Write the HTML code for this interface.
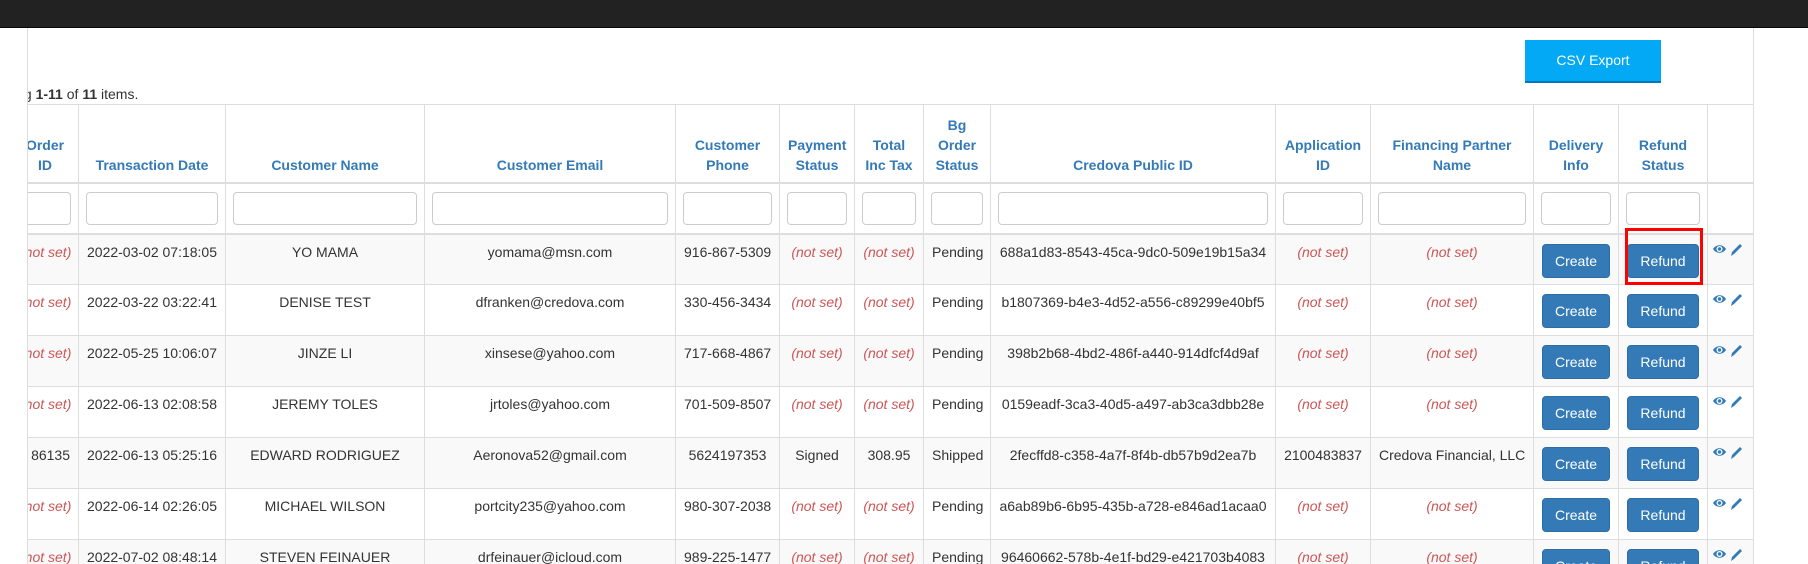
<!DOCTYPE html>
<html><head><meta charset="utf-8"><style>
*{box-sizing:border-box}
body{margin:0;width:1808px;height:564px;overflow:hidden;background:#fff;font-family:"Liberation Sans",Arial,sans-serif;font-size:14px;color:#333}
.bar{position:absolute;left:0;top:0;width:1808px;height:28px;background:#222;border-bottom:1px solid #080808}
.wrap{position:absolute;left:27px;top:28px;width:1727px;height:536px;overflow:hidden;border-left:1px solid #ddd;border-right:1px solid #ddd}
.csv{position:absolute;left:1497px;top:12px;width:136px;height:43px;background:#03a9f4;border-bottom:2px solid #0277bd;color:#fff;text-align:center;line-height:41px;font-size:14px}
.sum{position:absolute;left:-50px;top:56px;white-space:nowrap;line-height:20px}
table{position:absolute;left:-17px;top:76px;border-collapse:collapse;table-layout:fixed;width:1743px}
th,td{border:1px solid #ddd;padding:8px;text-align:center;line-height:20px;white-space:nowrap;overflow:hidden}
th{color:#337ab7;font-weight:bold;vertical-align:bottom;height:78px;border-bottom:2px solid #ddd;padding-bottom:7px;white-space:normal}
tr.f td{height:51px;padding:8px 7px;border-bottom:2px solid #ddd}
tr.f input{width:100%;height:33px;border:1px solid #ccc;border-radius:4px;display:block}
tbody tr{height:51px}
tbody td{height:51px;vertical-align:top;padding-top:7px;padding-bottom:0}
tbody tr:nth-child(odd) td{background:#f9f9f9}
.ns{color:#c55;font-style:italic}
.b{display:inline-block;background:#337ab7;border:1px solid #2e6da4;color:#fff;border-radius:4px;height:34px;line-height:32px;padding:0 12px;vertical-align:top}
td.btn{padding-top:9px;padding-bottom:0;vertical-align:top}
.red{position:absolute;left:1597px;top:200px;width:78px;height:57px;border:3px solid #f00}
.ic{padding:7px 0 0 4px;text-align:left}
.ic svg{display:block}
</style></head><body>
<div class="bar"></div>
<div class="wrap">
<div class="csv">CSV Export</div>
<div class="sum">Showing <b>1-11</b> of <b>11</b> items.</div>
<table>
<colgroup><col style="width:67px"><col style="width:147px"><col style="width:199px"><col style="width:251px"><col style="width:104px"><col style="width:75px"><col style="width:69px"><col style="width:67px"><col style="width:285px"><col style="width:95px"><col style="width:163px"><col style="width:85px"><col style="width:89px"><col style="width:47px"></colgroup>
<thead><tr><th>Order ID</th><th>Transaction Date</th><th>Customer Name</th><th>Customer Email</th><th>Customer Phone</th><th>Payment Status</th><th>Total Inc Tax</th><th>Bg Order Status</th><th>Credova Public ID</th><th>Application ID</th><th>Financing Partner Name</th><th>Delivery Info</th><th>Refund Status</th><th></th></tr>
<tr class="f"><td><input></td><td><input></td><td><input></td><td><input></td><td><input></td><td><input></td><td><input></td><td><input></td><td><input></td><td><input></td><td><input></td><td><input></td><td><input></td><td></td></tr></thead>
<tbody>
<tr><td class="ns">(not set)</td><td>2022-03-02 07:18:05</td><td>YO MAMA</td><td>yomama@msn.com</td><td>916-867-5309</td><td class="ns">(not set)</td><td class="ns">(not set)</td><td>Pending</td><td>688a1d83-8543-45ca-9dc0-509e19b15a34</td><td class="ns">(not set)</td><td class="ns">(not set)</td><td class="btn"><span class="b">Create</span></td><td class="btn"><span class="b">Refund</span></td><td class="ic">ICONS</td></tr>
<tr><td class="ns">(not set)</td><td>2022-03-22 03:22:41</td><td>DENISE TEST</td><td>dfranken@credova.com</td><td>330-456-3434</td><td class="ns">(not set)</td><td class="ns">(not set)</td><td>Pending</td><td>b1807369-b4e3-4d52-a556-c89299e40bf5</td><td class="ns">(not set)</td><td class="ns">(not set)</td><td class="btn"><span class="b">Create</span></td><td class="btn"><span class="b">Refund</span></td><td class="ic">ICONS</td></tr>
<tr><td class="ns">(not set)</td><td>2022-05-25 10:06:07</td><td>JINZE LI</td><td>xinsese@yahoo.com</td><td>717-668-4867</td><td class="ns">(not set)</td><td class="ns">(not set)</td><td>Pending</td><td>398b2b68-4bd2-486f-a440-914dfcf4d9af</td><td class="ns">(not set)</td><td class="ns">(not set)</td><td class="btn"><span class="b">Create</span></td><td class="btn"><span class="b">Refund</span></td><td class="ic">ICONS</td></tr>
<tr><td class="ns">(not set)</td><td>2022-06-13 02:08:58</td><td>JEREMY TOLES</td><td>jrtoles@yahoo.com</td><td>701-509-8507</td><td class="ns">(not set)</td><td class="ns">(not set)</td><td>Pending</td><td>0159eadf-3ca3-40d5-a497-ab3ca3dbb28e</td><td class="ns">(not set)</td><td class="ns">(not set)</td><td class="btn"><span class="b">Create</span></td><td class="btn"><span class="b">Refund</span></td><td class="ic">ICONS</td></tr>
<tr><td style="direction:rtl;text-align:right;padding-right:8px">86135</td><td>2022-06-13 05:25:16</td><td>EDWARD RODRIGUEZ</td><td>Aeronova52@gmail.com</td><td>5624197353</td><td>Signed</td><td>308.95</td><td>Shipped</td><td>2fecffd8-c358-4a7f-8f4b-db57b9d2ea7b</td><td>2100483837</td><td>Credova Financial, LLC</td><td class="btn"><span class="b">Create</span></td><td class="btn"><span class="b">Refund</span></td><td class="ic">ICONS</td></tr>
<tr><td class="ns">(not set)</td><td>2022-06-14 02:26:05</td><td>MICHAEL WILSON</td><td>portcity235@yahoo.com</td><td>980-307-2038</td><td class="ns">(not set)</td><td class="ns">(not set)</td><td>Pending</td><td>a6ab89b6-6b95-435b-a728-e846ad1acaa0</td><td class="ns">(not set)</td><td class="ns">(not set)</td><td class="btn"><span class="b">Create</span></td><td class="btn"><span class="b">Refund</span></td><td class="ic">ICONS</td></tr>
<tr><td class="ns">(not set)</td><td>2022-07-02 08:48:14</td><td>STEVEN FEINAUER</td><td>drfeinauer@icloud.com</td><td>989-225-1477</td><td class="ns">(not set)</td><td class="ns">(not set)</td><td>Pending</td><td>96460662-578b-4e1f-bd29-e421703b4083</td><td class="ns">(not set)</td><td class="ns">(not set)</td><td class="btn"><span class="b">Create</span></td><td class="btn"><span class="b">Refund</span></td><td class="ic">ICONS</td></tr>
</tbody></table>
<div class="red"></div>
</div>
<script>
var svg='<svg width="32" height="16" viewBox="0 0 32 16"><path d="M1 7C4 2 11 2 14 7C11 12 4 12 1 7Z" fill="#337ab7"/><circle cx="7.5" cy="7" r="3" fill="#fff"/><circle cx="7.5" cy="7" r="1.7" fill="#337ab7"/><path d="M19 14L20 10L28 2L30 4L22 12Z" fill="#337ab7"/></svg>';
document.querySelectorAll('td.ic').forEach(function(t){t.innerHTML=svg;});
</script>
</body></html>
